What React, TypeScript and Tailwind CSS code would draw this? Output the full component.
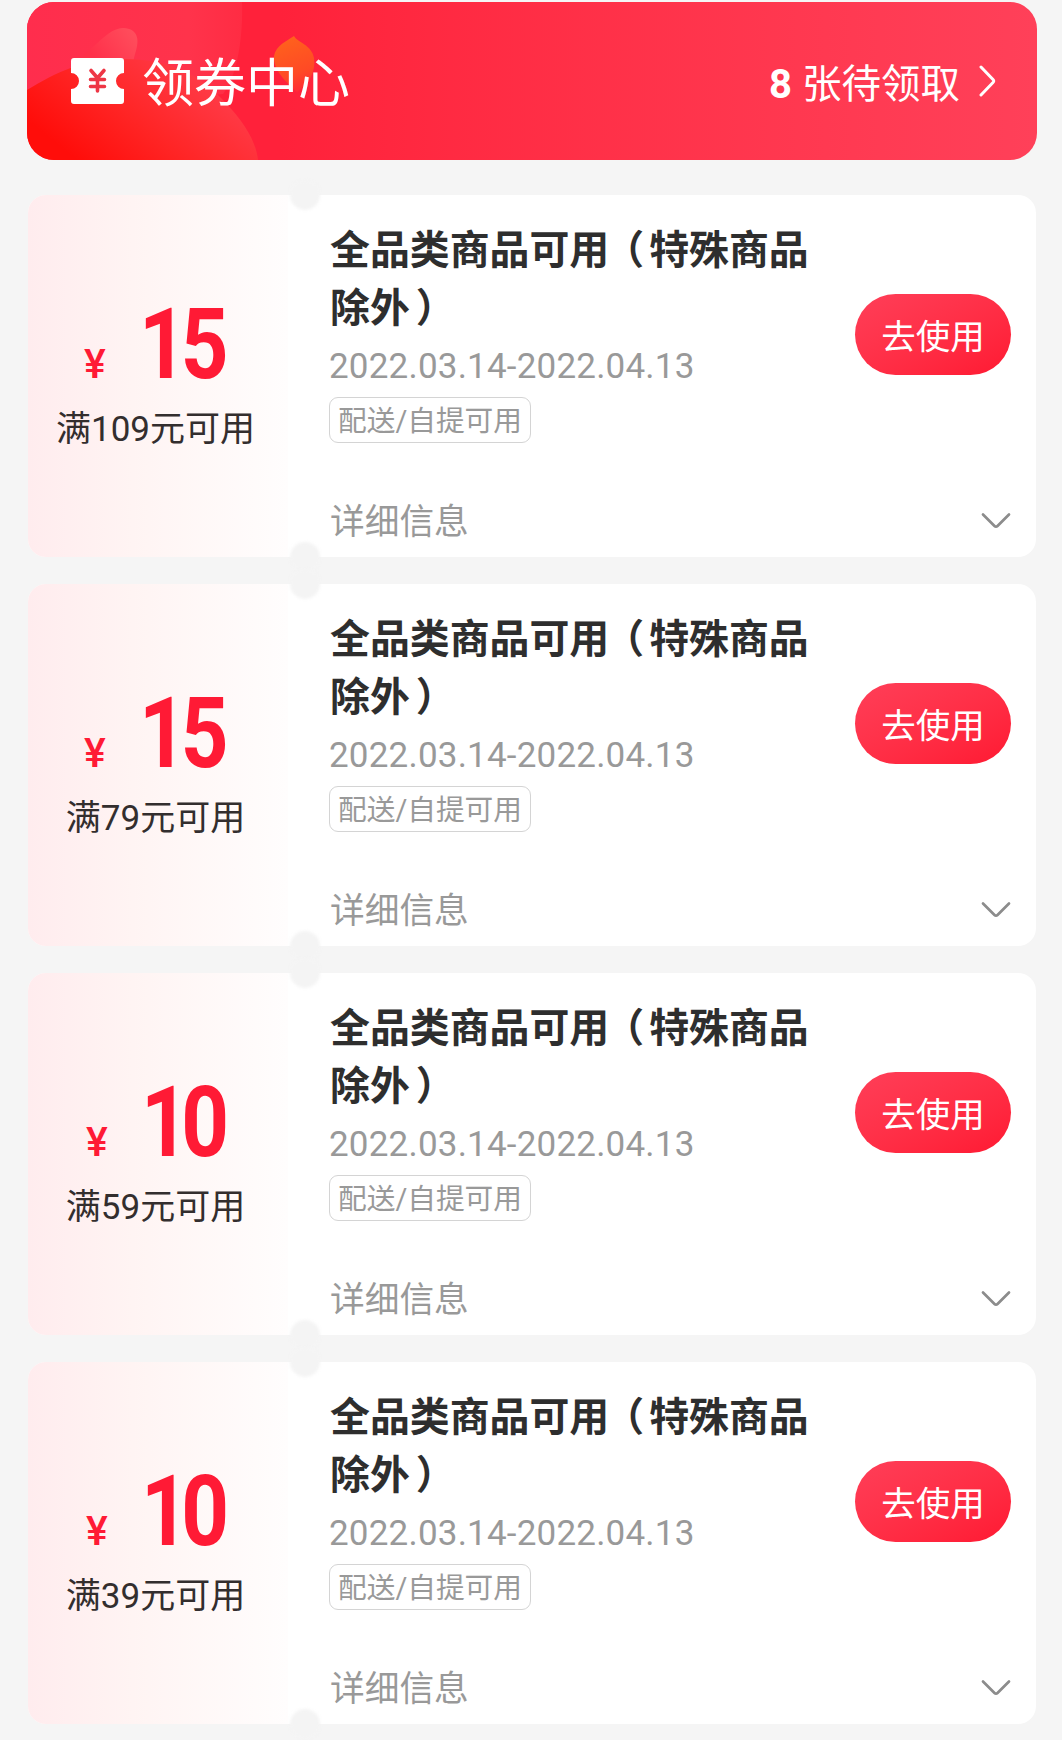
const coupons = [
  { amount: '15', condition: '满109元可用' },
  { amount: '15', condition: '满79元可用' },
  { amount: '10', condition: '满59元可用' },
  { amount: '10', condition: '满39元可用' },
];

// Slight kerning differences so that both face values end on the same edge.
const amountRow: Record<string, string> = { '15': '', '10': 'pl-[2px]' };
const amountKerning: Record<string, string> = {
  '15': 'w-[88px] tracking-[-7px]',
  '10': 'w-[86px] tracking-[-9px]',
};

function BannerArt() {
  return (
    <svg className="absolute inset-0" width="1010" height="158" viewBox="0 0 1010 158" fill="none">
      <defs>
        <linearGradient id="sheen" x1="0" y1="0" x2="1" y2="0">
          <stop offset="0" stopColor="#ff2d4d" />
          <stop offset="0.75" stopColor="#ff334b" />
          <stop offset="1" stopColor="#ff2c43" />
        </linearGradient>
        <linearGradient id="blob" x1="50" y1="158" x2="140" y2="45" gradientUnits="userSpaceOnUse">
          <stop offset="0" stopColor="#ff0d0a" />
          <stop offset="0.45" stopColor="#ff2424" />
          <stop offset="1" stopColor="#ff3b48" />
        </linearGradient>
        <linearGradient id="petal" x1="107" y1="26" x2="68" y2="56" gradientUnits="userSpaceOnUse">
          <stop offset="0" stopColor="#ff4f5d" />
          <stop offset="1" stopColor="#ff304a" />
        </linearGradient>
        <linearGradient id="leaf" x1="265" y1="36" x2="285" y2="90" gradientUnits="userSpaceOnUse">
          <stop offset="0" stopColor="#ff601d" />
          <stop offset="0.6" stopColor="#ff4a25" />
          <stop offset="1" stopColor="#ff2439" />
        </linearGradient>
      </defs>
      <path d="M0 0H215C216 34 211 72 196 92L0 110Z" fill="url(#sheen)" />
      <path d="M50 58C68 46 82 25 97 26C109 27 114 35 108 52L104 68H50Z" fill="url(#petal)" />
      <path d="M0 88C30 70 56 57 96 57C142 57 172 72 198 100C217 120 229 139 231 158H0Z" fill="url(#blob)" />
      <path d="M247 54C249 43 260 39 267 34C270 40 285 43 287 56C289 70 282 82 270 90C259 80 246 68 247 54Z" fill="url(#leaf)" />
    </svg>
  );
}

function TicketIcon() {
  return (
    <svg width="53" height="46" viewBox="0 0 53 46" fill="none">
      <path
        d="M3 0H50Q53 0 53 3V15A8 8 0 0 0 53 31V43Q53 46 50 46H3Q0 46 0 43V31A8 8 0 0 0 0 15V3Q0 0 3 0Z"
        fill="#fff"
      />
      <path
        d="M20 12.5L26.500 20L33 12.500M19.500 21.500H33.500M19.500 28.500H33.500M26.500 21V33"
        stroke="#ee3645"
        strokeWidth="3.600"
        strokeLinecap="round"
        strokeLinejoin="round"
      />
    </svg>
  );
}

function Banner() {
  return (
    <header className="relative flex h-[158px] items-center overflow-hidden rounded-[27px] bg-linear-to-r from-[#ff213a] from-25% to-[#ff4059] pr-[41px] pl-[44px] text-white">
      <BannerArt />
      <div className="relative flex flex-1 items-center">
        <TicketIcon />
        <h1 className="ml-[18px] pt-[7px] text-[52px] leading-none font-normal">领券中心</h1>
      </div>
      <div className="relative flex items-center">
        <span className="pt-[7px] text-[40px] leading-none font-bold">8</span>
        <span className="ml-[10px] pt-[7px] text-[39.5px] leading-none">张待领取</span>
        <svg className="ml-[19px]" width="17" height="32" viewBox="0 0 17 32" fill="none">
          <path d="M2 2L14 14.5Q15.500 16 14 17.500L2 30" stroke="#fff" strokeWidth="3" strokeLinecap="round" />
        </svg>
      </div>
    </header>
  );
}

function Coupon({ amount, condition }: { amount: string; condition: string }) {
  return (
    <article className="relative flex h-[362px] rounded-[18px] bg-white">
      <div className="flex w-[260px] flex-col items-center rounded-l-[18px] bg-linear-to-r from-[#ffecee] via-[#fff4f3] via-40% to-[#fffdfd] pt-[101px] pr-[5px]">
        <div className={`flex h-[98px] items-baseline text-[#ff1a35] ${amountRow[amount]}`}>
          <span className="text-[41px] leading-none font-medium">¥</span>
          <span
            className={`ml-[33px] origin-left scale-x-[0.85] text-[98px] leading-[98px] font-bold ${amountKerning[amount]}`}
          >
            {amount}
          </span>
        </div>
        <p className="mt-[16px] text-[35px] leading-[40px] text-[#332e2e]">{condition}</p>
      </div>
      <div className="flex flex-1 flex-col pr-[25px] pl-[42px]">
        <div className="flex justify-between pt-[27px]">
          <div>
            <h2 className="w-[490px] text-[39.9px] leading-[58px] font-bold text-[#2e2e2e]">
              全品类商品可用<span className="mr-[5px] ml-[15px] [font-feature-settings:'halt']">（</span>特殊商品
              <br />
              除外<span className="ml-[6px] [font-feature-settings:'halt']">）</span>
            </h2>
            <p className="-ml-px text-[35px] leading-[58px] tracking-[0.2px] text-[#999]">2022.03.14-2022.04.13</p>
            <span className="-ml-px mt-px flex h-[46px] w-[202px] items-center justify-center rounded-[9px] border border-[#d4d4d4] pt-[3px] text-[28.7px] leading-none text-[#999]">
              配送/自提可用
            </span>
          </div>
          <button className="mt-[72px] flex h-[81px] w-[156px] items-center justify-center rounded-full bg-linear-to-br from-[#ff3e58] to-[#ff1832] pt-[5px] text-[34.5px] leading-none text-white">
            去使用
          </button>
        </div>
        <div className="mt-[56px] flex items-center justify-between text-[#8c8c8c]">
          <span className="text-[34.7px] leading-[46px] text-[#999]">详细信息</span>
          <svg className="mb-[3px]" width="30" height="18" viewBox="0 0 30 18" fill="none">
            <path d="M2 2.500L13.500 14Q15 15.500 16.500 14L28 2.500" stroke="currentColor" strokeWidth="2.700" strokeLinecap="round" />
          </svg>
        </div>
      </div>
      <i className="absolute -top-[15px] left-[262px] size-[30px] rounded-full bg-[#f4f4f4] blur-[1.5px]" />
      <i className="absolute -bottom-[15px] left-[262px] size-[30px] rounded-full bg-[#f4f4f4] blur-[1.5px]" />
    </article>
  );
}

export default function App() {
  return (
    <main className="flex h-[1740px] w-[1062px] flex-col overflow-hidden bg-[#f5f5f5] px-[26px] pt-[2px] font-[Roboto,'Noto_Sans_CJK_SC',sans-serif]">
      <div className="-mr-px pl-px">
        <Banner />
      </div>
      <section className="mt-[35px] ml-[2px] flex flex-col gap-[27px]">
        {coupons.map((c, i) => (
          <Coupon key={i} {...c} />
        ))}
      </section>
    </main>
  );
}
